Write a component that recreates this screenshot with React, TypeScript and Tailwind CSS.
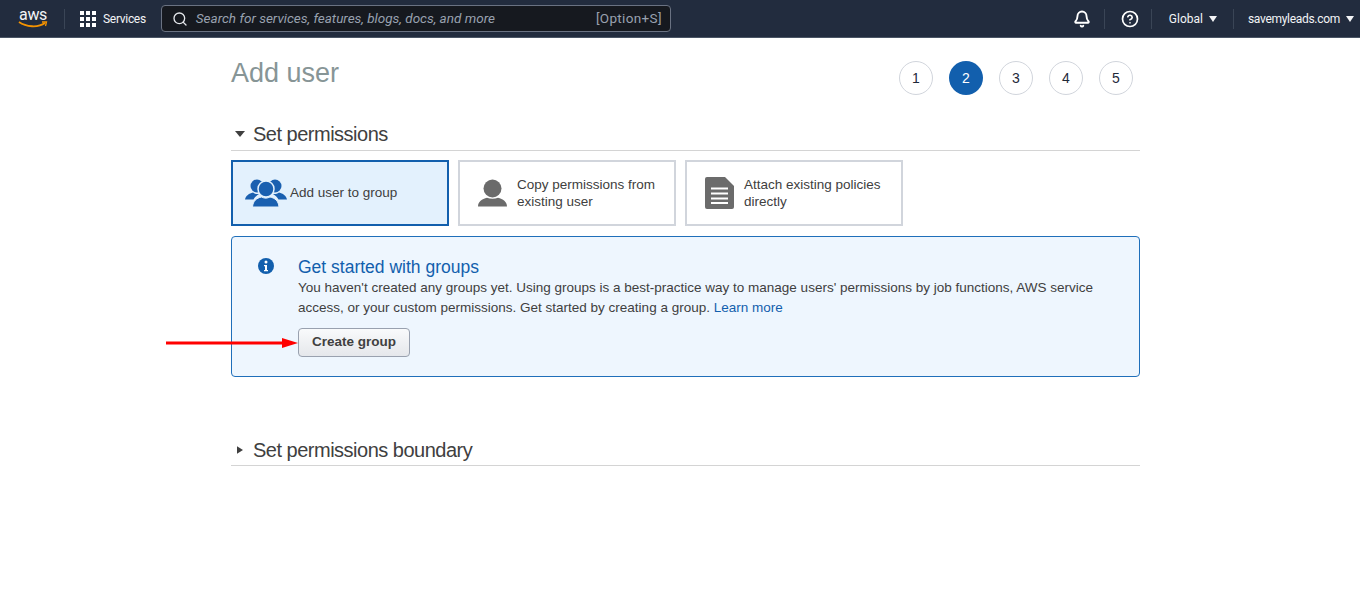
import { Bell, CircleHelp, Search } from "lucide-react";

const sans = "font-['Liberation_Sans',Arial,sans-serif]";
const nav = "font-['Roboto',sans-serif]";

function Caret({ className }: { className: string }) {
  return (
    <svg viewBox="0 0 10 6" className={className} fill="currentColor" preserveAspectRatio="none">
      <path d="M0 0h10L5 6z" />
    </svg>
  );
}

function GroupIcon() {
  return (
    <svg viewBox="0 0 42 28" className="w-10.5 h-7 shrink-0 text-[#1a60b0]" fill="currentColor">
      <circle cx="12" cy="7" r="6.500" />
      <circle cx="30" cy="7" r="6.500" />
      <path d="M0 20.5c1-4 4-6 8-7 2 1.500 4 1.800 6 1.500-2.500 1.500-4.500 3.500-5.500 5.500z" />
      <path d="M42 20.500c-1-4-4-6-8-7-2 1.500-4 1.800-6 1.500 2.500 1.500 4.500 3.500 5.500 5.500z" />
      <circle cx="21" cy="10" r="8" stroke="#e3f1fd" strokeWidth="1.500" />
      <path d="M7.500 28c.5-6 4-9 9-10 3 1.500 5.500 1.500 8.500 0 5 1 8.500 4 9 10z" stroke="#e3f1fd" strokeWidth="1" />
    </svg>
  );
}

function PersonIcon() {
  return (
    <svg viewBox="0 0 29 27" className="w-7.25 h-7 shrink-0 text-[#6b6b6b]" fill="currentColor">
      <circle cx="14.500" cy="9" r="9" />
      <path d="M0 27c0-5 4-7.500 9-8.800 3.500 1.500 7.500 1.500 11 0 5 1.300 9 3.800 9 8.800z" />
    </svg>
  );
}

function DocIcon() {
  return (
    <svg viewBox="0 0 29 32" className="w-7.25 h-8 shrink-0 text-[#6b6b6b]">
      <path d="M2 0h18l9 9v21a2 2 0 0 1-2 2H2a2 2 0 0 1-2-2V2a2 2 0 0 1 2-2z" fill="currentColor" />
      <path d="M6 11.500h17M6 16.500h17M6 21.500h17M6 26h17" stroke="#fff" strokeWidth="2" />
    </svg>
  );
}

function Sep({ className }: { className: string }) {
  return <div className={`w-px h-5 bg-[#3a4556] ${className}`} />;
}

function Step({ n, active }: { n: number; active?: boolean }) {
  return (
    <div
      className={
        active
          ? "size-8.5 rounded-full flex items-center justify-center text-sm bg-[#125fad] text-white"
          : "size-8.5 rounded-full flex items-center justify-center text-sm border border-gray-300 text-gray-800"
      }
    >
      {n}
    </div>
  );
}

export default function App() {
  return (
    <div className={`min-h-screen bg-white ${sans}`}>
      <header className={`h-9.5 flex items-center bg-[#222c3e] border-b border-gray-600 text-gray-100 ${nav}`}>
        <div className="ml-4.5 w-7.5 flex flex-col items-center leading-none">
          <span className="text-base leading-3 font-normal tracking-tight">aws</span>
          <svg viewBox="0 0 30 8" className="w-7.5 h-2 text-[#f79400]" fill="none" stroke="currentColor" strokeWidth="1.800">
            <path d="M1 1c7 5 19 6 26 1" />
            <path d="M24 1h4.500l-1 4" strokeWidth="1.300" />
          </svg>
        </div>
        <Sep className="ml-4" />
        <div className="ml-3.75 grid grid-cols-3 gap-0.5">
          {Array.from({ length: 9 }).map((_, i) => (
            <div key={i} className="size-1 bg-white" />
          ))}
        </div>
        <span className="ml-1.75 text-xs tracking-tight">Services</span>
        <div className="ml-3.75 w-127.5 h-6.75 flex items-center bg-[#16191f] border border-gray-500 rounded-sm">
          <Search className="ml-2.5 size-4 text-gray-200" />
          <span className="ml-2 text-[13.5px] italic text-gray-400">Search for services, features, blogs, docs, and more</span>
          <span className="ml-auto mr-2 text-[13.5px] tracking-wide text-gray-400">[Option+S]</span>
        </div>
        <Bell className="ml-auto size-4.5 text-white" strokeWidth={2.5} />
        <Sep className="ml-3.25" />
        <CircleHelp className="ml-4 size-4.5 text-white" strokeWidth={2.25} />
        <Sep className="ml-3" />
        <span className="ml-4.25 text-xs">Global</span>
        <Caret className="ml-1.5 w-2 h-1.5" />
        <Sep className="ml-4" />
        <span className="ml-3.5 text-xs tracking-tight">savemyleads.com</span>
        <Caret className="ml-1.5 mr-1.5 w-2 h-1.5" />
      </header>

      <main className="relative ml-[231px] w-[909px]">
        <div className="flex justify-between">
          <h1 className="mt-4.25 text-[27px] leading-9 text-[#879596]">Add user</h1>
          <div className="mt-5.75 mr-1.75 flex gap-4">
            <Step n={1} />
            <Step n={2} active />
            <Step n={3} />
            <Step n={4} />
            <Step n={5} />
          </div>
        </div>

        <div className="mt-6 flex items-center gap-2 h-7.5 border-b border-neutral-300 pb-px px-0.5 box-content">
          <Caret className="ml-0.5 w-2.5 h-1.5 text-neutral-700" />
          <h2 className="text-xl tracking-tight text-neutral-700">Set permissions</h2>
        </div>

        <div className="mt-2.25 flex gap-2.25">
          <div className="w-54.5 h-16.5 flex items-center gap-0.75 pl-3 border-2 border-[#125fad] bg-[#e3f1fd]">
            <GroupIcon />
            <span className="text-[13.5px] text-neutral-700">Add user to group</span>
          </div>
          <div className="w-54.5 h-16.5 flex items-center gap-2.5 pl-4.5 border-2 border-gray-300">
            <PersonIcon />
            <span className="text-[13.5px] leading-4.25 text-neutral-700">
              Copy permissions from
              <br />
              existing user
            </span>
          </div>
          <div className="w-54.5 h-16.5 flex items-center gap-2.5 pl-4.5 border-2 border-gray-300">
            <DocIcon />
            <span className="text-[13.5px] leading-4.25 text-neutral-700">
              Attach existing policies
              <br />
              directly
            </span>
          </div>
        </div>

        <div className="mt-2.5 h-35.25 flex border border-[#1f6fba] rounded-sm bg-[#eef6fe]">
          <svg viewBox="0 0 16 16" className="ml-6.5 mt-5.25 size-4 shrink-0 text-[#125fad]">
            <circle cx="8" cy="8" r="8" fill="currentColor" />
            <circle cx="8" cy="4" r="1.500" fill="#fff" />
            <path d="M6 7h3v5h1v1.300H6V12h1V8.300H6z" fill="#fff" />
          </svg>
          <div className="ml-6 mt-4.75">
            <h3 className="text-[17.5px] leading-5.5 text-[#125fad]">Get started with groups</h3>
            <p className="text-[13.5px] leading-5 text-neutral-700">
              You haven't created any groups yet. Using groups is a best-practice way to manage users' permissions by job functions, AWS service
              <br />
              access, or your custom permissions. Get started by creating a group. <span className="text-[#125fad]">Learn more</span>
            </p>
            <button className="mt-2.5 w-28 h-7.25 rounded-sm border border-gray-400 bg-gradient-to-b from-gray-50 to-gray-200 text-[13.5px] font-bold text-neutral-700">
              Create group
            </button>
          </div>
        </div>

        <svg viewBox="0 0 132 14" className="absolute left-[-65px] top-[298px] w-33 h-3.5">
          <path d="M0 5.500h118v3H0z" fill="#f00" />
          <path d="M116 2l16 5-16 5z" fill="#f00" />
        </svg>

        <div className="mt-14.5 flex items-center gap-2.5 h-7.5 border-b border-neutral-300 px-0.5 box-content">
          <svg viewBox="0 0 8 10" className="ml-1 w-1.5 h-2.5 text-neutral-700" fill="currentColor">
            <path d="M0 0l8 5-8 5z" />
          </svg>
          <h2 className="text-xl tracking-tight text-neutral-700">Set permissions boundary</h2>
        </div>
      </main>
    </div>
  );
}
